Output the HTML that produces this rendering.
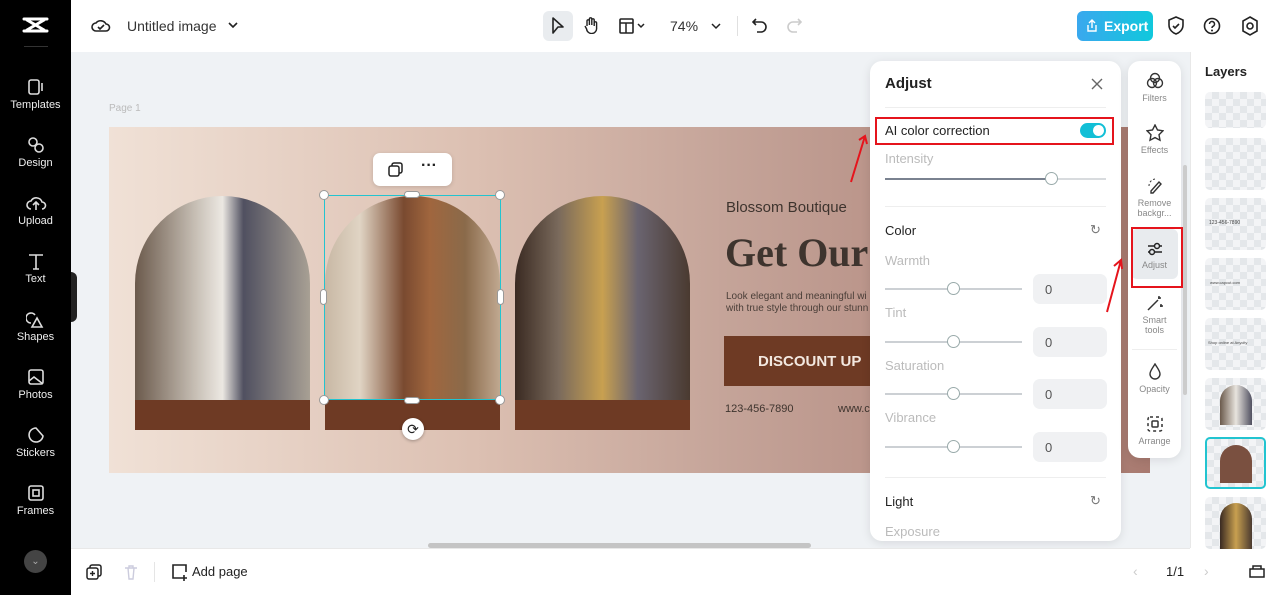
<!DOCTYPE html>
<html><head><meta charset="utf-8"><style>
*{box-sizing:border-box;margin:0;padding:0}
body{width:1280px;height:595px;overflow:hidden;font-family:"Liberation Sans",sans-serif;background:#eff2f5;position:relative;color:#222}
.abs{position:absolute}
#side{left:0;top:0;width:71px;height:595px;background:#000}
.si{position:absolute;left:0;width:71px;text-align:center;color:#eee;font-size:11px}
.si svg{display:block;margin:0 auto 3px}
#top{left:71px;top:0;width:1209px;height:52px;background:#fff}
#bot{left:71px;top:548px;width:1119px;height:47px;background:#fff;border-top:1px solid #e8e8e8}
#layers{left:1190px;top:52px;width:90px;height:496px;background:#fff;border-left:1px solid #e8e8e8}
.th{position:absolute;left:14px;width:61px;height:52px;border-radius:5px;background:
 repeating-conic-gradient(#e4e7ea 0 25%,#f3f4f6 0 50%) 0 0/14px 14px}
.card{position:absolute;background:#fff;border-radius:12px;box-shadow:0 2px 10px rgba(0,0,0,.1)}
.lbl{color:#bbb;font-size:13px;position:absolute;left:15px}
.trk{position:absolute;height:2px;background:#ccd0d4}
.knob{position:absolute;width:13px;height:13px;border-radius:50%;background:#fff;border:1.5px solid #9aa;}
.box{position:absolute;left:163px;width:74px;height:30px;border-radius:7px;background:#f0f1f3;font-size:13px;color:#555;padding:8px 12px}
.tl{position:absolute;left:0;width:53px;text-align:center;font-size:9px;color:#888;line-height:10px}
.tl svg{display:block;margin:0 auto 3px}
</style></head><body>
<div id="side" class="abs">
 <svg class="abs" style="left:22px;top:16px" width="27" height="18" viewBox="0 0 27 18"><path d="M2 3h23M2 15h23M5 4l17 10M22 4L5 14" stroke="#fff" stroke-width="3" fill="none" stroke-linecap="round"/></svg>
 <div class="abs" style="left:24px;top:46px;width:24px;height:1px;background:#333"></div>
 <div class="si" style="top:78px"><svg width="20" height="18"><rect x="3" y="2" width="10" height="14" rx="2" fill="none" stroke="#ddd" stroke-width="1.6"/><path d="M16 5v8" stroke="#ddd" stroke-width="1.6"/></svg>Templates</div>
 <div class="si" style="top:136px"><svg width="20" height="18"><circle cx="7" cy="6" r="4" fill="none" stroke="#ddd" stroke-width="1.6"/><circle cx="13" cy="12" r="4" fill="none" stroke="#ddd" stroke-width="1.6"/></svg>Design</div>
 <div class="si" style="top:194px"><svg width="22" height="18"><path d="M6 15a4 4 0 0 1 0-8 6 6 0 0 1 11 1 3.5 3.5 0 0 1 0 7M11 16V9M8 11l3-3 3 3" fill="none" stroke="#ddd" stroke-width="1.6"/></svg>Upload</div>
 <div class="si" style="top:252px"><svg width="20" height="18"><path d="M3 3h14M10 3v14M7 17h6" stroke="#ddd" stroke-width="1.6"/></svg>Text</div>
 <div class="si" style="top:310px"><svg width="20" height="18"><path d="M9 5a5 5 0 1 0-4 8M11 8l5 9H6z" fill="none" stroke="#ddd" stroke-width="1.6"/></svg>Shapes</div>
 <div class="si" style="top:368px"><svg width="20" height="18"><rect x="3" y="2" width="14" height="14" rx="2" fill="none" stroke="#ddd" stroke-width="1.6"/><path d="M3 13l5-4 9 7" fill="none" stroke="#ddd" stroke-width="1.6"/></svg>Photos</div>
 <div class="si" style="top:426px"><svg width="20" height="18"><path d="M10 2a7 7 0 1 0 7 8l-7-8z" fill="none" stroke="#ddd" stroke-width="1.6"/></svg>Stickers</div>
 <div class="si" style="top:484px"><svg width="20" height="18"><rect x="3" y="2" width="14" height="14" rx="2" fill="none" stroke="#ddd" stroke-width="1.6"/><rect x="7" y="6" width="6" height="6" fill="none" stroke="#ddd" stroke-width="1.6"/></svg>Frames</div>
 <div class="abs" style="left:24px;top:550px;width:23px;height:23px;border-radius:50%;background:#444;color:#aaa;font-size:10px;text-align:center;line-height:23px">⌄</div>
</div>
<div class="abs" style="left:71px;top:272px;width:6px;height:50px;background:#222;border-radius:0 6px 6px 0"></div>
<div id="top" class="abs">
 <svg class="abs" style="left:20px;top:17px" width="20" height="16"><path d="M5 14a4 4 0 0 1 0-8 6 6 0 0 1 10 1 3.5 3.5 0 0 1 0 7z M7 10l2 2 4-4" fill="none" stroke="#222" stroke-width="1.6"/></svg>
 <div class="abs" style="left:56px;top:18px;font-size:14px;color:#333">Untitled image</div>
 <svg class="abs" style="left:157px;top:21px" width="10" height="8"><path d="M1 2l4 4 4-4" fill="none" stroke="#222" stroke-width="1.6"/></svg>
 <div class="abs" style="left:472px;top:11px;width:30px;height:30px;background:#e9ecef;border-radius:6px"></div>
 <svg class="abs" style="left:480px;top:17px" width="14" height="18"><path d="M2 1l10 9H7l-5 6z" fill="none" stroke="#222" stroke-width="1.6" stroke-linejoin="round"/></svg>
 <svg class="abs" style="left:512px;top:16px" width="16" height="18"><path d="M4 10V5a1.2 1.2 0 0 1 2.4 0v4V3a1.2 1.2 0 0 1 2.4 0v6V4a1.2 1.2 0 0 1 2.4 0v6-3a1.2 1.2 0 0 1 2.4 0v5a5 5 0 0 1-10 1L2 10" fill="none" stroke="#222" stroke-width="1.4"/></svg>
 <svg class="abs" style="left:548px;top:18px" width="28" height="16"><rect x="1" y="1" width="13" height="14" rx="1" fill="none" stroke="#222" stroke-width="1.6"/><path d="M1 5h13M7 5v10M19 6l3 3 3-3" fill="none" stroke="#222" stroke-width="1.5"/></svg>
 <div class="abs" style="left:599px;top:18px;font-size:14px;color:#333">74%</div>
 <svg class="abs" style="left:640px;top:22px" width="10" height="8"><path d="M1 2l4 4 4-4" fill="none" stroke="#222" stroke-width="1.5"/></svg>
 <div class="abs" style="left:666px;top:16px;width:1px;height:20px;background:#e0e0e0"></div>
 <svg class="abs" style="left:681px;top:17px" width="16" height="18"><path d="M4 2L1 5l3 3M1 5h8a5 5 0 0 1 0 10H5" fill="none" stroke="#222" stroke-width="1.6"/></svg>
 <svg class="abs" style="left:715px;top:17px" width="16" height="18"><path d="M12 2l3 3-3 3M15 5H7a5 5 0 0 0 0 10h4" fill="none" stroke="#ccc" stroke-width="1.6"/></svg>
 <div class="abs" style="left:1006px;top:11px;width:76px;height:30px;border-radius:6px;background:linear-gradient(90deg,#3aa8ee,#10c8dc);color:#fff;font-size:14px;font-weight:bold;padding:7px 0 0 27px">Export</div>
 <svg class="abs" style="left:1015px;top:19px" width="12" height="13"><path d="M2 6v6h8V6M6 9V1M3 4l3-3 3 3" fill="none" stroke="#fff" stroke-width="1.4"/></svg>
 <svg class="abs" style="left:1096px;top:16px" width="18" height="20"><path d="M9 1l7 3v5c0 5-4 8-7 9-3-1-7-4-7-9V4z M6 10l2 2 4-4" fill="none" stroke="#222" stroke-width="1.6"/></svg>
 <svg class="abs" style="left:1132px;top:17px" width="18" height="18"><circle cx="9" cy="9" r="7.5" fill="none" stroke="#222" stroke-width="1.6"/><path d="M6.5 7a2.5 2.5 0 1 1 3.5 2.3c-.7.3-1 .8-1 1.7" fill="none" stroke="#222" stroke-width="1.5"/><circle cx="9" cy="13.5" r="1" fill="#222"/></svg>
 <svg class="abs" style="left:1170px;top:16px" width="18" height="20"><path d="M9 1l7 4v10l-7 4-7-4V5z" fill="none" stroke="#222" stroke-width="1.6"/><circle cx="9" cy="10" r="3" fill="none" stroke="#222" stroke-width="1.6"/></svg>
</div>
<div class="abs" style="left:109px;top:103px;font-size:10px;color:#bbb">Page 1</div>
<div class="abs" style="left:109px;top:127px;width:1041px;height:346px;background:linear-gradient(90deg,#f0e1d6 0%,#dcc0b2 35%,#c4a398 60%,#a87a70 100%)"></div>
<div class="abs" style="left:135px;top:196px;width:175px;height:205px;border-radius:88px 88px 0 0;background:linear-gradient(90deg,#6b5a4c 0%,#c8c0b6 35%,#ece8e2 50%,#505060 62%,#a8a094 100%)"></div>
<div class="abs" style="left:135px;top:400px;width:175px;height:30px;background:#6e3a24"></div>
<div class="abs" style="left:325px;top:196px;width:175px;height:205px;border-radius:88px 88px 0 0;background:linear-gradient(90deg,#c8b8a4 0%,#e0d4c4 20%,#7a4a30 45%,#a0663e 60%,#8a6a4a 80%,#c0a890 100%)"></div>
<div class="abs" style="left:325px;top:400px;width:175px;height:30px;background:#6e3a24"></div>
<div class="abs" style="left:515px;top:196px;width:175px;height:205px;border-radius:88px 88px 0 0;background:linear-gradient(90deg,#3a2a22 0%,#7a6a5c 25%,#c8a050 50%,#6a6470 70%,#4a3a30 100%)"></div>
<div class="abs" style="left:515px;top:400px;width:175px;height:30px;background:#6e3a24"></div>
<div class="abs" style="left:324px;top:195px;width:177px;height:205px;border:1.5px solid #22c4d0"></div>
<div class="abs" style="left:319px;top:190px;width:10px;height:10px;border-radius:50%;background:#fff;border:1px solid #999"></div>
<div class="abs" style="left:495px;top:190px;width:10px;height:10px;border-radius:50%;background:#fff;border:1px solid #999"></div>
<div class="abs" style="left:319px;top:395px;width:10px;height:10px;border-radius:50%;background:#fff;border:1px solid #999"></div>
<div class="abs" style="left:495px;top:395px;width:10px;height:10px;border-radius:50%;background:#fff;border:1px solid #999"></div>
<div class="abs" style="left:404px;top:191px;width:16px;height:7px;border-radius:4px;background:#fff;border:1px solid #999"></div>
<div class="abs" style="left:404px;top:397px;width:16px;height:7px;border-radius:4px;background:#fff;border:1px solid #999"></div>
<div class="abs" style="left:320px;top:289px;width:7px;height:16px;border-radius:4px;background:#fff;border:1px solid #999"></div>
<div class="abs" style="left:497px;top:289px;width:7px;height:16px;border-radius:4px;background:#fff;border:1px solid #999"></div>
<div class="abs" style="left:402px;top:418px;width:22px;height:22px;border-radius:50%;background:#fff;box-shadow:0 1px 3px rgba(0,0,0,.3);font-size:14px;text-align:center;line-height:22px">⟳</div>
<div class="abs" style="left:373px;top:153px;width:79px;height:33px;border-radius:7px;background:#fff;box-shadow:0 1px 4px rgba(0,0,0,.15)"></div>
<svg class="abs" style="left:388px;top:162px" width="15" height="15"><rect x="4" y="1" width="10" height="10" rx="2" fill="none" stroke="#222" stroke-width="1.5"/><rect x="1" y="4" width="10" height="10" rx="2" fill="#fff" stroke="#222" stroke-width="1.5"/></svg>
<div class="abs" style="left:421px;top:157px;font-size:16px;font-weight:bold">···</div>
<div class="abs" style="left:726px;top:199px;font-size:15px;color:#3e342e">Blossom Boutique</div>
<div class="abs" style="left:725px;top:229px;font-size:40px;color:#3e342e;font-family:'Liberation Serif',serif;font-weight:bold;white-space:nowrap">Get Our</div>
<div class="abs" style="left:726px;top:291px;font-size:10px;color:#4a3e38;line-height:12px;white-space:nowrap">Look elegant and meaningful wi<br>with true style through our stunn</div>
<div class="abs" style="left:724px;top:336px;width:150px;height:50px;background:#6e3a24;color:#f3e8e0;font-size:15px;font-weight:bold;padding:17px 0 0 34px;white-space:nowrap;overflow:hidden">DISCOUNT UP</div>
<div class="abs" style="left:725px;top:403px;font-size:11px;color:#3e342e">123-456-7890</div>
<div class="abs" style="left:838px;top:403px;font-size:11px;color:#3e342e">www.c</div>
<div class="card" style="left:870px;top:61px;width:251px;height:480px;overflow:hidden">
 <div class="abs" style="left:15px;top:14px;font-size:15px;font-weight:bold">Adjust</div>
 <svg class="abs" style="left:220px;top:16px" width="14" height="14"><path d="M2 2l10 10M12 2L2 12" stroke="#666" stroke-width="1.4"/></svg>
 <div class="abs" style="left:15px;top:46px;width:221px;height:1px;background:#eee"></div>
 <div class="abs" style="left:5px;top:56px;width:239px;height:28px;border:2px solid #e5141c"></div>
 <div class="abs" style="left:15px;top:62px;font-size:13px;color:#222">AI color correction</div>
 <div class="abs" style="left:210px;top:62px;width:26px;height:15px;border-radius:8px;background:#12bfd6"></div>
 <div class="abs" style="left:223px;top:64px;width:11px;height:11px;border-radius:50%;background:#fff"></div>
 <div class="lbl" style="top:90px">Intensity</div>
 <div class="trk" style="left:15px;top:117px;width:221px;background:#d8dbde"></div>
 <div class="trk" style="left:15px;top:117px;width:166px;background:#7a8290"></div>
 <div class="knob" style="left:175px;top:111px"></div>
 <div class="abs" style="left:15px;top:145px;width:221px;height:1px;background:#eee"></div>
 <div class="abs" style="left:15px;top:162px;font-size:13px;color:#222">Color</div>
 <div class="abs" style="left:220px;top:161px;font-size:13px;color:#777">↻</div>
 <div class="lbl" style="top:192px">Warmth</div><div class="trk" style="left:15px;top:227px;width:137px"></div><div class="knob" style="left:77px;top:221px"></div><div class="box" style="top:213px">0</div>
 <div class="lbl" style="top:244px">Tint</div><div class="trk" style="left:15px;top:280px;width:137px"></div><div class="knob" style="left:77px;top:274px"></div><div class="box" style="top:266px">0</div>
 <div class="lbl" style="top:297px">Saturation</div><div class="trk" style="left:15px;top:332px;width:137px"></div><div class="knob" style="left:77px;top:326px"></div><div class="box" style="top:318px">0</div>
 <div class="lbl" style="top:349px">Vibrance</div><div class="trk" style="left:15px;top:385px;width:137px"></div><div class="knob" style="left:77px;top:379px"></div><div class="box" style="top:371px">0</div>
 <div class="abs" style="left:15px;top:416px;width:221px;height:1px;background:#eee"></div>
 <div class="abs" style="left:15px;top:433px;font-size:13px;color:#222">Light</div>
 <div class="abs" style="left:220px;top:432px;font-size:13px;color:#777">↻</div>
 <div class="lbl" style="top:463px">Exposure</div>
</div>
<div class="card" style="left:1128px;top:61px;width:53px;height:397px">
 <div class="tl" style="top:11px"><svg width="18" height="18"><circle cx="9" cy="6" r="4.5" fill="none" stroke="#333" stroke-width="1.4"/><circle cx="6" cy="11" r="4.5" fill="none" stroke="#333" stroke-width="1.4"/><circle cx="12" cy="11" r="4.5" fill="none" stroke="#333" stroke-width="1.4"/></svg>Filters</div>
 <div class="tl" style="top:63px"><svg width="18" height="18"><path d="M9 1l2.5 5 5.5.8-4 3.9 1 5.5L9 13.6 4 16.2l1-5.5-4-3.9 5.5-.8z" fill="none" stroke="#333" stroke-width="1.4"/></svg>Effects</div>
 <div class="tl" style="top:116px"><svg width="18" height="18"><path d="M5 14l8-9 2 2-8 9H5z" fill="none" stroke="#333" stroke-width="1.4"/><path d="M3 9a7 7 0 0 1 6-7" fill="none" stroke="#333" stroke-dasharray="2 2"/></svg>Remove<br>backgr...</div>
 <div class="abs" style="left:3px;top:168px;width:47px;height:50px;background:#e8ebee;border-radius:6px"></div>
 <div class="tl" style="top:180px"><svg width="18" height="16"><path d="M2 5h14M2 11h14" stroke="#222" stroke-width="1.5"/><circle cx="11" cy="5" r="2.5" fill="#e8ebee" stroke="#222" stroke-width="1.5"/><circle cx="6" cy="11" r="2.5" fill="#e8ebee" stroke="#222" stroke-width="1.5"/></svg>Adjust</div>
 <div class="tl" style="top:233px"><svg width="18" height="18"><path d="M2 16L12 6M13 2v3M15 4h-3M15 10v3M17 12h-3" fill="none" stroke="#333" stroke-width="1.5"/></svg>Smart<br>tools</div>
 <div class="abs" style="left:4px;top:288px;width:45px;height:1px;background:#eee"></div>
 <div class="tl" style="top:302px"><svg width="18" height="18"><path d="M9 1C6 6 4 8 4 11a5 5 0 0 0 10 0c0-3-2-5-5-10z" fill="none" stroke="#333" stroke-width="1.4"/></svg>Opacity</div>
 <div class="tl" style="top:354px"><svg width="18" height="18"><rect x="2" y="2" width="14" height="14" rx="2" fill="none" stroke="#333" stroke-width="1.5" stroke-dasharray="3 3"/><rect x="6" y="6" width="6" height="6" rx="1" fill="none" stroke="#333" stroke-width="1.5"/></svg>Arrange</div>
</div>
<div class="abs" style="left:1183px;top:165px;width:4px;height:230px;background:#ccc;border-radius:2px"></div>
<div class="abs" style="left:1131px;top:227px;width:52px;height:61px;border:2px solid #e5141c"></div>
<svg class="abs" style="left:845px;top:130px;width:290px;height:190px" viewBox="0 0 290 190"><path d="M6 52L20 6M14 10l6-4 2 8" stroke="#e5141c" stroke-width="2" fill="none"/><path d="M262 182L276 130M269 136l7-6 1 9" stroke="#e5141c" stroke-width="2" fill="none"/></svg>
<div id="layers" class="abs">
 <div class="abs" style="left:14px;top:12px;font-size:13px;font-weight:bold">Layers</div>
 <div class="th" style="top:40px;height:36px"></div>
 <div class="th" style="top:86px"></div>
 <div class="th" style="top:146px"><span style="position:absolute;left:4px;top:22px;font-size:5px;color:#444">123-456-7890</span></div>
 <div class="th" style="top:206px"><span style="position:absolute;left:5px;top:22px;font-size:4px;color:#444">www.capcut.com</span></div>
 <div class="th" style="top:266px"><span style="position:absolute;left:3px;top:22px;font-size:4px;color:#444">Shop online at Anycity</span></div>
 <div class="th" style="top:326px"><div style="position:absolute;left:15px;top:7px;width:32px;height:40px;border-radius:16px 16px 0 0;background:linear-gradient(90deg,#6b5a4c,#e8e4de,#505060)"></div></div>
 <div class="th" style="top:385px;border:2px solid #22c4d0"><div style="position:absolute;left:13px;top:6px;width:32px;height:38px;border-radius:16px 16px 0 0;background:#7a5040"></div></div>
 <div class="th" style="top:445px"><div style="position:absolute;left:15px;top:6px;width:32px;height:46px;border-radius:16px 16px 0 0;background:linear-gradient(90deg,#3a2a22,#c8a050,#4a3a30)"></div></div>
</div>
<div id="bot" class="abs">
 <svg class="abs" style="left:15px;top:15px" width="16" height="16"><rect x="4" y="1" width="11" height="11" rx="2" fill="none" stroke="#222" stroke-width="1.5"/><rect x="1" y="4" width="11" height="11" rx="2" fill="#fff" stroke="#222" stroke-width="1.5"/><path d="M6.5 7v5M4 9.5h5" stroke="#222" stroke-width="1.4"/></svg>
 <svg class="abs" style="left:52px;top:15px" width="16" height="16"><path d="M2 4h12M5 4l1 11h4l1-11M6 4V2h4v2" fill="none" stroke="#ccd" stroke-width="1.4"/></svg>
 <div class="abs" style="left:83px;top:13px;width:1px;height:20px;background:#e5e5e5"></div>
 <svg class="abs" style="left:100px;top:14px" width="18" height="18"><path d="M10 15H2V2h13v7M13 12v6M10 15h6" fill="none" stroke="#222" stroke-width="1.6"/></svg>
 <div class="abs" style="left:121px;top:15px;font-size:13px;color:#222">Add page</div>
 <div class="abs" style="left:357px;top:-6px;width:383px;height:5px;border-radius:3px;background:#c4c4c4"></div>
 <div class="abs" style="left:1062px;top:14px;font-size:14px;color:#ccc">‹</div>
 <div class="abs" style="left:1095px;top:15px;font-size:13px;color:#222">1/1</div>
 <div class="abs" style="left:1133px;top:14px;font-size:14px;color:#ccc">›</div>
</div>
<svg class="abs" style="left:1248px;top:562px" width="18" height="17"><path d="M2 7h14v8H2zM5 7V4h8v3" fill="none" stroke="#222" stroke-width="1.5"/></svg>
<div class="abs" style="left:1190px;top:548px;width:90px;height:47px;background:#fff;z-index:-1"></div>
</body></html>
